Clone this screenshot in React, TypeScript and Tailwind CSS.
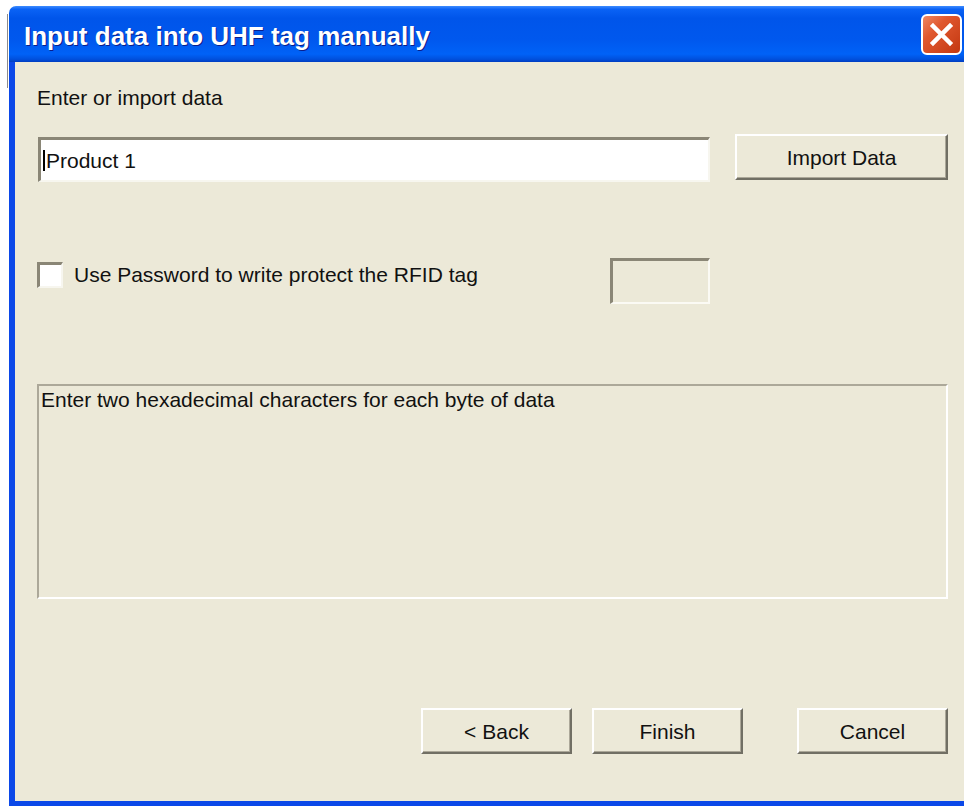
const font = "font-['Liberation_Sans',Arial,sans-serif]";

// raised 3D push button in the XP "classic" look
const Btn = ({ label, className = "" }: { label: string; className?: string }) => (
  <button
    className={`h-[46px] w-[151px] shrink-0 border-2 border-t-white border-l-white border-r-[#716f64] border-b-[#716f64] bg-[#ece9d8] text-[21px] leading-none text-[#111] shadow-[inset_-1px_-1px_0_#aca899] ${className}`}
  >
    {label}
  </button>
);

const CloseIcon = () => (
  <svg width="41" height="41" viewBox="0 0 41 41">
    <defs>
      <linearGradient id="closeBg" x1="0" y1="0" x2="1" y2="1">
        <stop offset="0" stopColor="#f08a66" />
        <stop offset="0.35" stopColor="#e0582f" />
        <stop offset="1" stopColor="#c2360f" />
      </linearGradient>
    </defs>
    <rect x="1" y="1" width="39" height="39" rx="5" fill="url(#closeBg)" stroke="#fff" strokeWidth="2" />
    <path d="M12 12 L29 29 M29 12 L12 29" stroke="#fff" strokeWidth="4.5" strokeLinecap="square" />
  </svg>
);

export default function App() {
  return (
    <div className={`flex h-[806px] w-[964px] overflow-hidden bg-white ${font}`}>
      {/* strip of desktop left of the window */}
      <div className="w-[9px] shrink-0">
        <div className="ml-[7px] mt-[14px] h-[74px] w-px bg-[#8c8c8c]" />
      </div>

      <div className="mt-[6px] flex flex-1 flex-col overflow-hidden rounded-tl-[7px]">
        {/* title bar */}
        <div className="flex h-[56px] shrink-0 items-start bg-[linear-gradient(to_bottom,#3d8cff_0%,#0a62f5_6%,#0055ea_22%,#0058ee_60%,#0062f7_86%,#0050dd_95%,#003cc0_100%)]">
          <div className="ml-[15px] mt-[15px] text-[26px] font-bold leading-[30px] text-white [text-shadow:1px_1px_0_#0a1e8c]">
            Input data into UHF tag manually
          </div>
          <div className="ml-auto mr-[2px] mt-[8px]">
            <CloseIcon />
          </div>
        </div>

        {/* dialog body */}
        <div className="flex flex-1 flex-col border-b-[5px] border-l-[6px] border-[#0b48e8] bg-[#ece9d8] pl-[22px] pr-[16px] text-[21px] text-[#111]">
          <div className="mt-[24px] leading-[24px]">Enter or import data</div>

          <div className="mt-[24px] flex h-[46px] items-start">
            <div className="ml-[1px] mt-[3px] flex h-[45px] w-[672px] items-center border-t-[3px] border-l-[3px] border-b-2 border-r-2 border-t-[#8a8676] border-l-[#8a8676] border-b-[#f7f6ef] border-r-[#f7f6ef] bg-white pl-[2px]">
              <span className="inline-block h-[21px] w-[2px] bg-black" />
              <span className="ml-px leading-none">Product 1</span>
            </div>
            <button className="ml-auto h-[46px] w-[213px] border-2 border-t-white border-l-white border-r-[#716f64] border-b-[#716f64] bg-[#ece9d8] text-[21px] leading-none shadow-[inset_-1px_-1px_0_#aca899]">
              Import Data
            </button>
          </div>

          <div className="mt-[78px] flex h-[46px] items-start">
            <div className="flex w-[573px] items-start">
              <div className="mt-[4px] h-[26px] w-[26px] border-t-[3px] border-l-[3px] border-b-2 border-r-2 border-t-[#8a8676] border-l-[#8a8676] border-b-[#f7f6ef] border-r-[#f7f6ef] bg-white" />
              <div className="ml-[11px] mt-[5px] leading-[24px]">Use Password to write protect the RFID tag</div>
            </div>
            <div className="h-[46px] w-[100px] border-t-[3px] border-l-[3px] border-b-2 border-r-2 border-t-[#8a8676] border-l-[#8a8676] border-b-[#fbfaf4] border-r-[#fbfaf4] bg-[#ece9d8]" />
          </div>

          <div className="mt-[80px] h-[215px] w-full border-2 border-t-[#aca899] border-l-[#aca899] border-b-white border-r-white pl-[2px] pt-[2px] leading-[24px]">
            Enter two hexadecimal characters for each byte of data
          </div>

          <div className="mt-[109px] flex">
            <Btn label="< Back" className="ml-[384px]" />
            <Btn label="Finish" className="ml-[20px]" />
            <Btn label="Cancel" className="ml-[54px]" />
          </div>
        </div>
      </div>
    </div>
  );
}
